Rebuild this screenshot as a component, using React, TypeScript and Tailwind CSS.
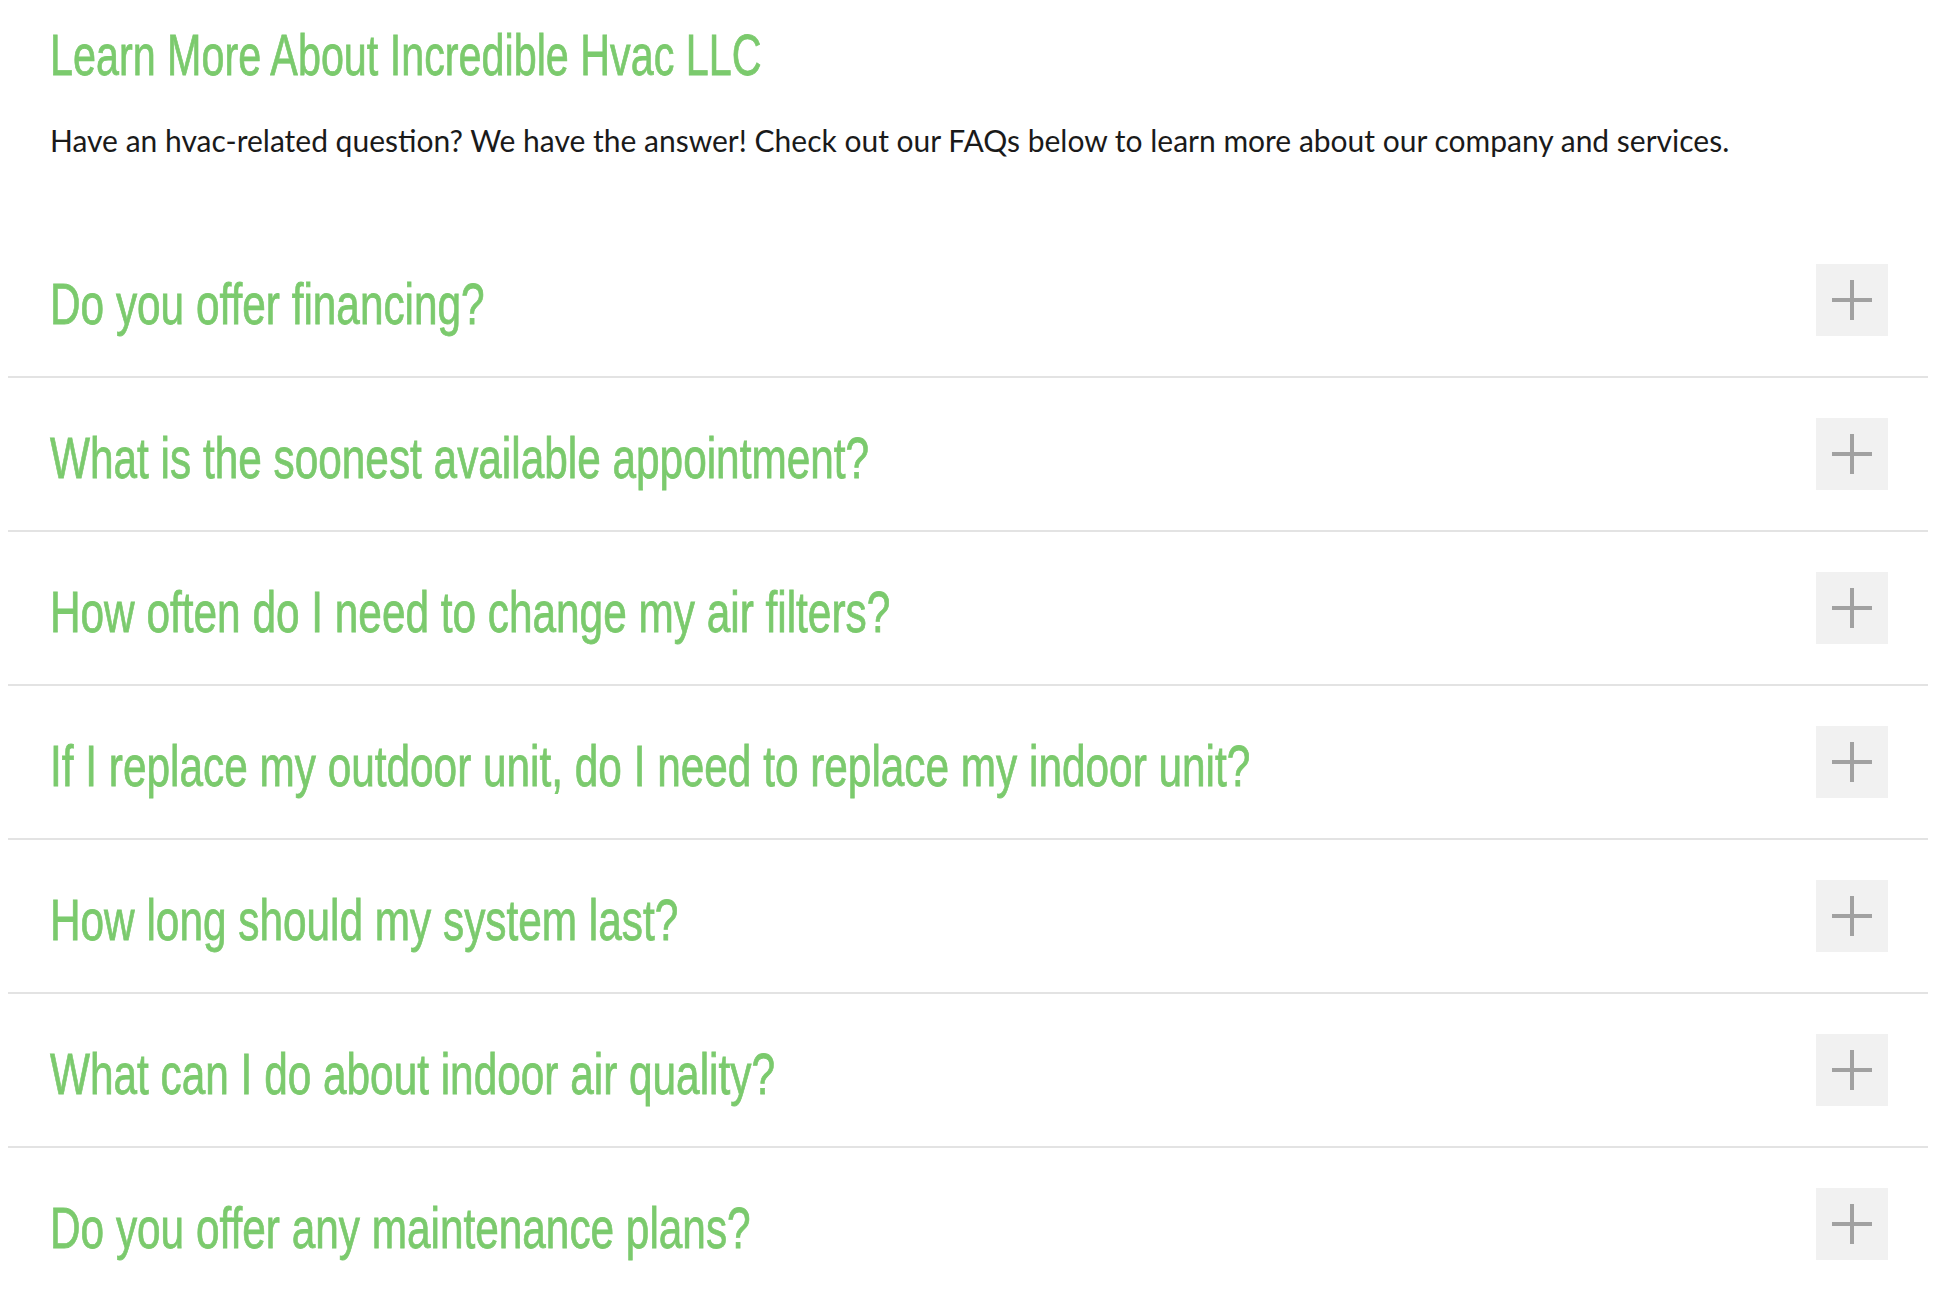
const questions = [
  "Do you offer financing?",
  "What is the soonest available appointment?",
  "How often do I need to change my air filters?",
  "If I replace my outdoor unit, do I need to replace my indoor unit?",
  "How long should my system last?",
  "What can I do about indoor air quality?",
  "Do you offer any maintenance plans?",
];

// no condensed face installed, so squeeze Liberation Sans horizontally
const condensed =
  "inline-block origin-left whitespace-nowrap font-['Liberation_Sans',Arial,sans-serif] text-[58px] leading-[68px] text-[#7bca6d] [-webkit-text-stroke:0.8px_#7bca6d]";

function PlusButton() {
  return (
    <button className="w-[72px] h-[72px] bg-[#f1f1f1] flex items-center justify-center shrink-0">
      <svg width="40" height="40" viewBox="0 0 40 40">
        <rect x="0" y="18" width="40" height="4" fill="#a1a1a1" />
        <rect x="18" y="0" width="4" height="40" fill="#a1a1a1" />
      </svg>
    </button>
  );
}

export default function App() {
  return (
    <div className="min-h-screen bg-white">
      <div className="ml-[8px] w-[1920px]">
        <div className="px-[42px] pt-[21px]">
          <h2 className={`${condensed} scale-x-[0.712]`}>Learn More About Incredible Hvac LLC</h2>
          <p className="mt-[31px] font-['Lato',sans-serif] text-[30px] leading-[40px] text-[#1a1a1a]">
            Have an hvac-related question? We have the answer! Check out our FAQs below to learn more about our company and services.
          </p>
        </div>

        <div className="mt-[64px]">
          {questions.map((q) => (
            <div
              key={q}
              className="flex items-center justify-between pl-[42px] pr-[40px] py-[40px] border-b-2 border-[#e3e3e3] last:border-b-0"
            >
              <h3 className={`${condensed} scale-x-[0.73] translate-y-[4px]`}>{q}</h3>
              <PlusButton />
            </div>
          ))}
        </div>
      </div>
    </div>
  );
}
